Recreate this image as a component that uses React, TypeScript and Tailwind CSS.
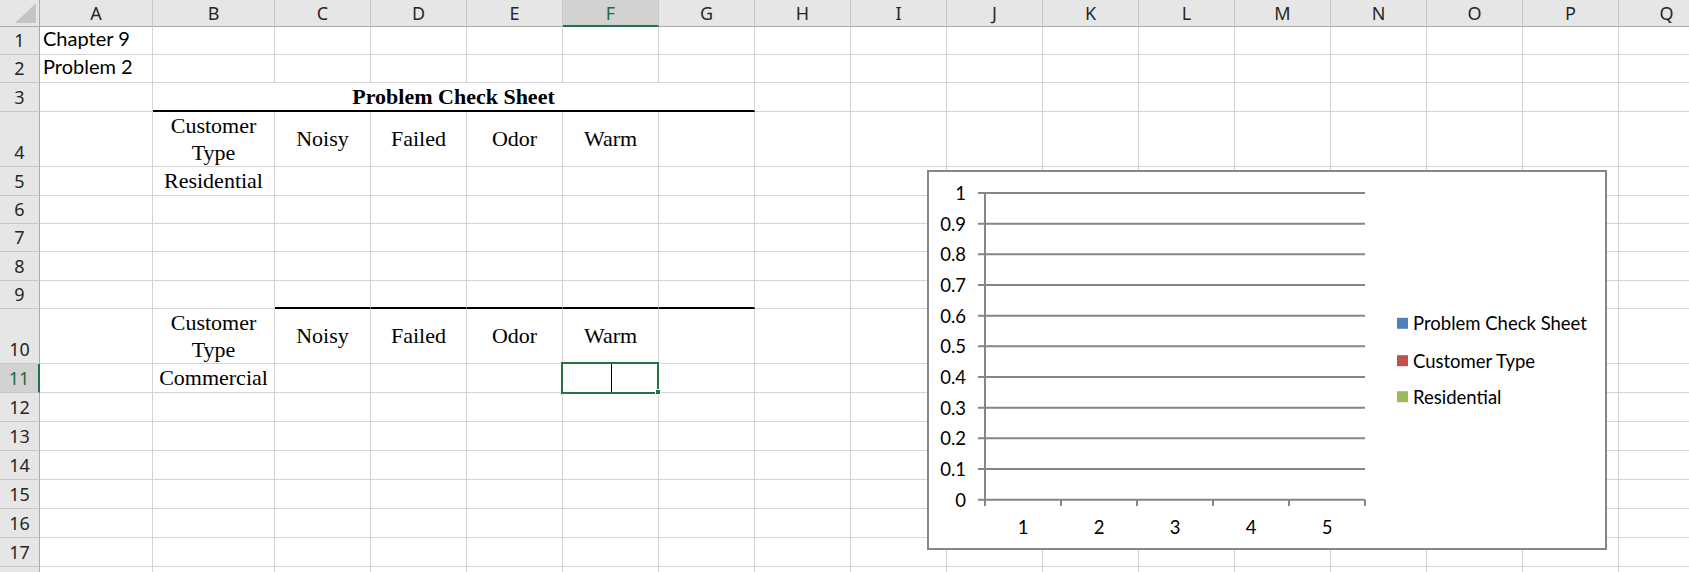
import React from "react";

const COLS = ["A", "B", "C", "D", "E", "F", "G", "H", "I", "J", "K", "L", "M", "N", "O", "P", "Q"];
const ROWS = Array.from({ length: 18 }, (_, i) => i + 1);

const SERIF = "font-['Liberation_Serif',serif] text-[22px] text-black";
const CALIBRI = "font-['Lato',sans-serif] text-[20px] text-black";
const HEAD = "font-['Noto_Sans',sans-serif] text-[18px]";

const LABELS = ["Noisy", "Failed", "Odor", "Warm"];

function CustomerType() {
  return (
    <div className={`${SERIF} w-full text-center leading-[27px]`}>
      Customer
      <br />
      Type
    </div>
  );
}

function cellBody(col: number, row: number) {
  const name = COLS[col];
  if (name === "A" && row === 1) return { cls: "items-end pl-[3px] pb-[4px]", node: <span className={`${CALIBRI} leading-[24px]`}>Chapter 9</span> };
  if (name === "A" && row === 2) return { cls: "items-end pl-[3px] pb-[4px]", node: <span className={`${CALIBRI} leading-[24px]`}>Problem 2</span> };
  if (name === "B" && (row === 4 || row === 10)) return { cls: "items-center", node: <CustomerType /> };
  if (name === "B" && row === 5) return { cls: "items-center justify-center", node: <span className={`${SERIF} leading-[26px]`}>Residential</span> };
  if (name === "B" && row === 11) return { cls: "items-center justify-center", node: <span className={`${SERIF} leading-[26px]`}>Commercial</span> };
  if ((row === 4 || row === 10) && col >= 2 && col <= 5)
    return { cls: "items-center justify-center", node: <span className={`${SERIF} leading-[26px]`}>{LABELS[col - 2]}</span> };
  return { cls: "", node: null };
}

function Chart() {
  const x0 = 56;
  const xEnd = 436;
  const yOf = (v: number) => 327.7 - v * 306.7;
  const ticks = Array.from({ length: 11 }, (_, i) => i / 10);
  const legend = [
    { label: "Problem Check Sheet", color: "#4F81BD", y: 151.3 },
    { label: "Customer Type", color: "#C0504D", y: 188.7 },
    { label: "Residential", color: "#9BBB59", y: 224.7 },
  ];
  return (
    <div className="absolute left-[927px] top-[170px] h-[380px] w-[680px] border-2 border-[#868686] bg-white">
      <svg width="676" height="376" className="block font-['Lato',sans-serif]">
        {ticks.map((v) => (
          <g key={v}>
            <line x1={49} x2={xEnd} y1={yOf(v)} y2={yOf(v)} stroke="#868686" strokeWidth="2" />
            <text x={37} y={yOf(v)} textAnchor="end" dominantBaseline="central" fontSize="18.5" fill="#000">
              {v === 0 ? "0" : v === 1 ? "1" : v.toFixed(1)}
            </text>
          </g>
        ))}
        <line x1={x0} x2={x0} y1={yOf(1)} y2={334} stroke="#868686" strokeWidth="2" />
        {[0, 1, 2, 3, 4, 5].map((i) => (
          <line key={i} x1={x0 + i * 76} x2={x0 + i * 76} y1={yOf(0)} y2={334} stroke="#868686" strokeWidth="2" />
        ))}
        {[1, 2, 3, 4, 5].map((n) => (
          <text key={n} x={x0 + (n - 0.5) * 76} y={354.7} textAnchor="middle" dominantBaseline="central" fontSize="18.5" fill="#000">
            {n}
          </text>
        ))}
        {legend.map((l) => (
          <g key={l.label}>
            <rect x={468} y={l.y - 5.5} width="11" height="11" fill={l.color} />
            <text x={484} y={l.y} dominantBaseline="central" fontSize="18.5" fill="#000">
              {l.label}
            </text>
          </g>
        ))}
      </svg>
    </div>
  );
}

export default function App() {
  return (
    <div className="relative h-[572px] w-[1689px] overflow-hidden bg-white">
      <div className="grid grid-cols-[40px_113px_122px_repeat(15,96px)] grid-rows-[27px_28px_28px_29px_55px_29px_28px_28px_29px_28px_55px_29px_29px_29px_29px_29px_29px_29px_29px]">
        {/* select-all corner */}
        <div className="border-r border-b border-r-[#ababab] border-b-[#ababab] bg-[#e6e6e6]">
          <svg className="block" width="39" height="26">
            <polygon points="15,23 36,23 36,3" fill="#c4c4c4" />
          </svg>
        </div>
        {COLS.map((c) =>
          c === "F" ? (
            <div key={c} className={`${HEAD} flex items-center justify-center border-r border-b-2 border-r-[#c6c6c6] border-b-[#217346] bg-[#d2d2d2] pt-[1px] text-[#1e6b3f]`}>
              {c}
            </div>
          ) : (
            <div key={c} className={`${HEAD} flex items-center justify-center border-r border-b border-r-[#c6c6c6] border-b-[#ababab] bg-[#e6e6e6] text-[#262626]`}>
              {c}
            </div>
          )
        )}

        {ROWS.map((r) => (
          <React.Fragment key={r}>
            {r === 11 ? (
              <div className={`${HEAD} flex items-end justify-center border-r-2 border-b border-r-[#217346] border-b-[#c6c6c6] bg-[#d2d2d2] pb-[2px] leading-[24px] text-[#1e6b3f]`}>
                {r}
              </div>
            ) : (
              <div className={`${HEAD} flex items-end justify-center border-r border-b border-r-[#ababab] border-b-[#c6c6c6] bg-[#e6e6e6] pb-[2px] leading-[24px] text-[#262626]`}>
                {r < 18 ? r : null}
              </div>
            )}
            {COLS.map((c, ci) => {
              if (r === 3 && ci >= 2 && ci <= 6) return null;
              if (r === 3 && c === "B") {
                return (
                  <div key={c} className="col-span-6 flex items-center justify-center border-r border-b-2 border-r-[#d4d4d4] border-b-black">
                    <span className={`${SERIF} font-bold leading-[26px]`}>Problem Check Sheet</span>
                  </div>
                );
              }
              const body = cellBody(ci, r);
              const thick = r === 9 && ci >= 2 && ci <= 6;
              return (
                <div
                  key={c}
                  className={`flex overflow-hidden border-r border-r-[#d4d4d4] ${thick ? "border-b-2 border-b-black" : "border-b border-b-[#d4d4d4]"} ${body.cls}`}
                >
                  {body.node}
                </div>
              );
            })}
          </React.Fragment>
        ))}
      </div>

      {/* active cell F11 */}
      <div className="absolute left-[561px] top-[362px] h-[32px] w-[98px] border-2 border-[#217346]" />
      <div className="absolute left-[611px] top-[364px] h-[28px] w-px bg-black" />
      <div className="absolute left-[655px] top-[389px] h-[6px] w-[6px] border border-white bg-[#217346]" />

      <Chart />
    </div>
  );
}
